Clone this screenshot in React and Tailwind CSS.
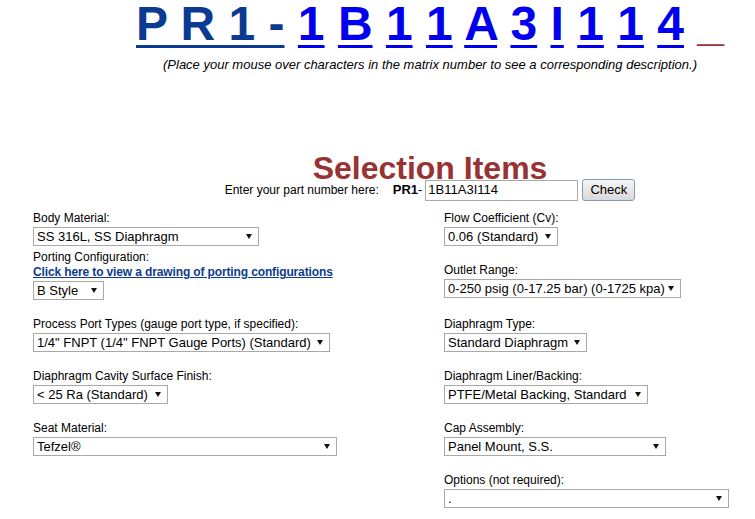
import React from "react";

const matrix = ["1", "B", "1", "1", "A", "3", "I", "1", "1", "4"];

function Arrow() {
  return (
    <svg width="6" height="5" viewBox="0 0 6 5" className="shrink-0">
      <polygon points="0,0 6,0 3,5" fill="#111" />
    </svg>
  );
}

function Select({ width, value }) {
  return (
    <div
      className="mt-[1px] flex h-[19px] items-center justify-between border border-[#a9a9a9] bg-white pl-[3px] pr-[6px] text-[13px] leading-[17px] text-black"
      style={{ width }}
    >
      <span className="whitespace-nowrap">{value}</span>
      <Arrow />
    </div>
  );
}

function Field({ label, width, value, className = "" }) {
  return (
    <div className={className}>
      <div className="text-[12px] leading-[15px] text-black">{label}</div>
      <Select width={width} value={value} />
    </div>
  );
}

export default function App() {
  return (
    <div className="w-full overflow-hidden bg-white font-['Liberation_Sans',Arial,sans-serif] text-black">
      <div className="w-[860px]">
        {/* part number matrix */}
        <div className="-mt-[4px] whitespace-pre text-center text-[48px] font-bold leading-[55px]">
          <a className="text-[#0b3a93] underline decoration-[3px] underline-offset-[5px]">P R 1 -</a>
          {" "}
          {matrix.map((c, i) => (
            <React.Fragment key={i}>
              <a className="text-[#0000ee] underline decoration-[3px] underline-offset-[5px]">{c}</a>
              {" "}
            </React.Fragment>
          ))}
          <span className="text-[#993333]">_</span>
        </div>
        <p className="mt-[6px] text-center text-[13px] italic leading-[15px]">
          (Place your mouse over characters in the matrix number to see a corresponding description.)
        </p>

        <h1 className="mt-[83px] text-center text-[32px] font-bold leading-[26px] text-[#993333]">
          Selection Items
        </h1>
        <div className="-mt-[2px] flex h-[22px] items-center justify-center">
          <span className="text-[12px]">Enter your part number here:</span>
          <span className="ml-[14px] text-[13px] font-bold">PR1</span>
          <span className="text-[13px]">-</span>
          <div className="ml-[3px] flex h-[21px] w-[153px] items-center border border-[#a9a9a9] pl-[2px] text-[13px]">
            1B11A3I114
          </div>
          <button className="ml-[4px] h-[22px] w-[53px] rounded-[3px] border border-[#7f9db9] bg-linear-to-b from-[#f6f6f6] to-[#d8d8d8] text-[13px] text-black">
            Check
          </button>
        </div>

        <div className="mt-[10px] grid grid-cols-[411px_1fr] gap-y-[17px] pl-[33px]">
          <div>
            <Field label="Body Material:" width={226} value="SS 316L, SS Diaphragm" />
            <div className="mt-[4px] text-[12px] leading-[15px]">Porting Configuration:</div>
            <a className="block text-[12px] font-bold leading-[15px] tracking-[-0.13px] text-[#0d3b8e] underline">
              Click here to view a drawing of porting configurations
            </a>
            <Select width={71} value="B Style" />
          </div>
          <div>
            <Field label="Flow Coefficient (Cv):" width={114} value="0.06 (Standard)" />
            <Field className="mt-[17px]" label="Outlet Range:" width={237} value="0-250 psig (0-17.25 bar) (0-1725 kpa)" />
          </div>

          <Field label="Process Port Types (gauge port type, if specified):" width={297} value={'1/4" FNPT (1/4" FNPT Gauge Ports) (Standard)'} />
          <Field label="Diaphragm Type:" width={143} value="Standard Diaphragm" />

          <Field label="Diaphragm Cavity Surface Finish:" width={135} value="< 25 Ra (Standard)" />
          <Field label="Diaphragm Liner/Backing:" width={204} value="PTFE/Metal Backing, Standard" />

          <Field label="Seat Material:" width={304} value="Tefzel®" />
          <Field label="Cap Assembly:" width={222} value="Panel Mount, S.S." />

          <div />
          <Field label="Options (not required):" width={285} value="." />
        </div>
      </div>
    </div>
  );
}
